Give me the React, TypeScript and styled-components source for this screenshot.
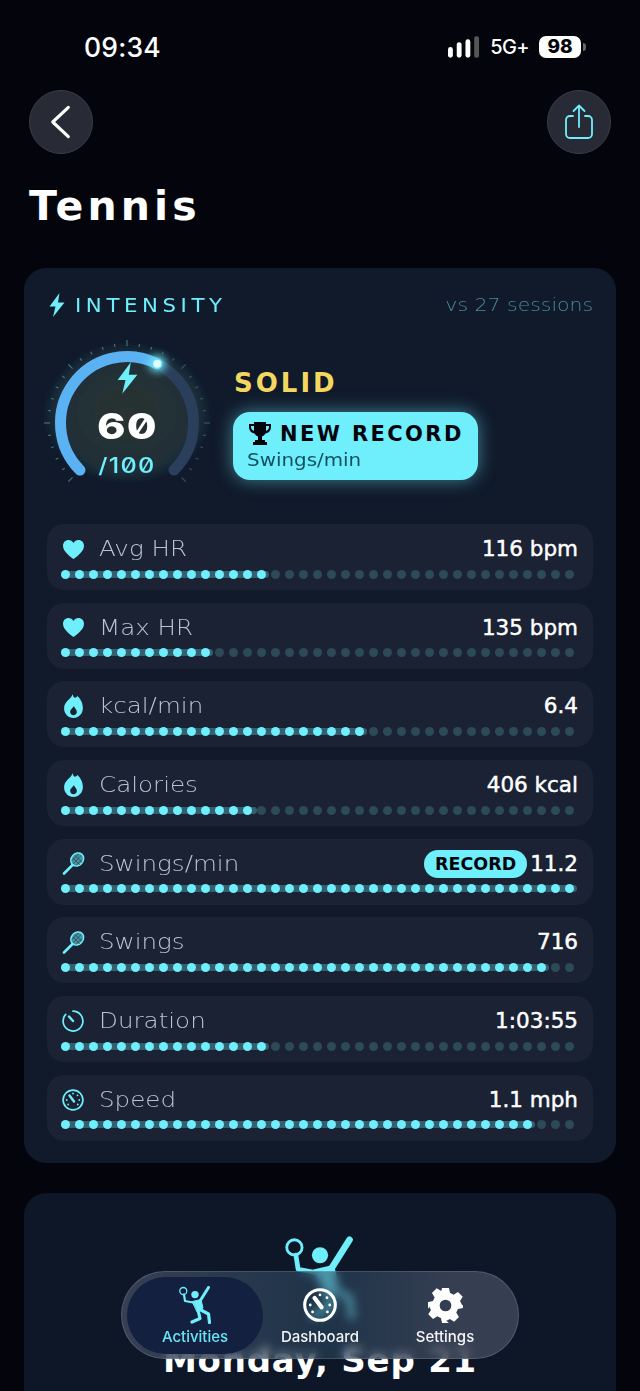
import React from "react";
import styled, { createGlobalStyle } from "styled-components";

const Global = createGlobalStyle`
  html, body { margin: 0; padding: 0; background: #04050c; }
  * { box-sizing: border-box; }
`;
const display = `"DejaVu Sans", "Liberation Sans", sans-serif`;
const ui = `Inter, "Liberation Sans", sans-serif`;
const cyan = "#6feefc";

const Page = styled.div`
  position: relative; width: 640px; height: 1391px; overflow: hidden;
  background: #04050c; font-family: ${display}; color: #fff;
`;
const StatusBar = styled.div`
  height: 90px; padding: 33px 54px 0 84px; display: flex; justify-content: space-between; align-items: flex-start;
  font-family: ${ui};
`;
const Clock = styled.div`font-size: 26.5px; line-height: 28px; font-weight: 500; letter-spacing: 0.2px;`;
const StatusRight = styled.div`display: flex; align-items: center; gap: 10px; height: 28px;`;
const Network = styled.div`font-size: 20px; font-weight: 500; line-height: 28px; letter-spacing: -0.6px;`;
const BatteryWrap = styled.div`display: flex; align-items: center; gap: 2px;`;
const Battery = styled.div`
  width: 42px; height: 22px; background: #fff; border-radius: 7px; color: #04050c;
  font-size: 19px; font-weight: 800; line-height: 22px; text-align: center;
`;
const BatteryTip = styled.div`width: 3px; height: 8px; background: #666; border-radius: 0 3px 3px 0;`;
const TopBar = styled.div`height: 64px; padding: 0 29px; display: flex; justify-content: space-between;`;
const RoundButton = styled.button`
  width: 64px; height: 64px; border-radius: 50%; padding: 0; border: 1px solid #3a3d47;
  background: #282b35; display: flex; align-items: center; justify-content: center;
`;
const Title = styled.h1`
  margin: 30px 0 0 29px; height: 44px; font-size: 41px; line-height: 44px; font-weight: 700;
  letter-spacing: 4.1px; font-family: ${display}; color: #fff;
`;
const Card = styled.section`
  margin: 40px 24px 0; height: 895px; padding: 0 23px; border-radius: 22px;
  background: #101a2b; display: flex; flex-direction: column;
`;
const CardHeader = styled.div`height: 74px; padding-top: 23px; display: flex; justify-content: space-between; align-items: flex-start;`;
const HeaderLeft = styled.div`display: flex; align-items: center; gap: 10px; height: 28px; padding-left: 2px;`;
const HeaderTitle = styled.div`
  font-size: 19px; line-height: 28px; font-weight: 400; letter-spacing: 4.1px; color: ${cyan};
  transform: scaleX(1.12); transform-origin: left center;
`;
const HeaderNote = styled.div`
  font-size: 17px; line-height: 28px; color: #4a8a9c; font-weight: 300; white-space: nowrap;
  transform: scaleX(1.2); transform-origin: right center;
`;
const Summary = styled.div`height: 182px; display: flex; align-items: flex-start;`;
const GaugeBox = styled.div`position: relative; width: 186px; height: 176px; flex: none; margin-left: -13px;`;
const GaugeSvg = styled.svg`position: absolute; inset: 0; overflow: visible;`;
const GaugeText = styled.div`
  position: absolute; inset: 0; display: flex; flex-direction: column; align-items: center;
`;
const GaugeValue = styled.div`
  margin-top: 64px; font-size: 36px; line-height: 40px; font-weight: 800; letter-spacing: 1px; color: #fff;
  font-family: ${ui}; font-feature-settings: "zero"; transform: scaleX(1.2);
`;
const GaugeMax = styled.div`
  margin-top: 2px; font-size: 21px; line-height: 36px; font-weight: 500; color: ${cyan}; letter-spacing: 1px;
  font-family: ${ui}; font-feature-settings: "zero"; transform: scaleX(1.2);
`;
const SummaryRight = styled.div`margin-left: 14px; padding-top: 26px; display: flex; flex-direction: column;`;
const Grade = styled.div`font-size: 26px; line-height: 30px; font-weight: 700; letter-spacing: 3px; color: #f3d860;`;
const RecordBox = styled.div`
  margin: 14px 0 0 -1px; width: 245px; height: 68px; border-radius: 17px; background: ${cyan};
  box-shadow: 0 0 18px rgba(111,238,252,.5); padding: 8px 14px; color: #04050c;
`;
const RecordTop = styled.div`display: flex; align-items: center; gap: 9px; padding-left: 2px; height: 28px;`;
const RecordTitle = styled.div`font-size: 21px; font-weight: 700; letter-spacing: 2.4px; line-height: 28px; white-space: nowrap;`;
const RecordSub = styled.div`
  font-size: 17px; line-height: 24px; color: #15505e; transform: scaleX(1.17); transform-origin: left center;
`;
const RowList = styled.div`display: flex; flex-direction: column; gap: 12.7px;`;
const Row = styled.div`height: 66px; border-radius: 17px; background: #1a2233; padding: 10px 15px 0 14px;`;
const RowHead = styled.div`height: 30px; display: flex; align-items: center;`;
const IconBox = styled.div`width: 24px; display: flex; justify-content: center; align-items: center; flex: none;`;
const RowLabel = styled.div`
  margin-left: 14px; flex: 1; font-size: 21px; font-weight: 300; color: #b8c4d4; line-height: 30px;
  transform: scaleX(1.17); transform-origin: left center;
`;
const RowValue = styled.div`
  font-size: 21.5px; font-weight: 400; line-height: 30px; color: #fff; white-space: nowrap;
  -webkit-text-stroke: 0.45px #fff;
`;
const RecordPill = styled.div`
  width: 103px; height: 28px; border-radius: 14px; background: ${cyan}; color: #04050c; margin-right: 3px;
  font-size: 17.5px; font-weight: 700; line-height: 28px; text-align: center;
`;
const Track = styled.div`position: relative; margin-top: 5.5px; height: 9px; display: flex; gap: 5px;`;
const TrackFill = styled.div`position: absolute; left: 0; top: 1px; bottom: 1px; border-radius: 4px; background: rgba(111,238,252,.3);`;
const Dot = styled.span<{ $on: boolean }>`
  position: relative; width: 9px; height: 9px; border-radius: 50%; flex: none;
  background: ${(p) => (p.$on ? cyan : "#2c4a58")};
`;
const LowerCard = styled.section`
  margin: 30px 24px 0; height: 260px; border-radius: 22px 22px 0 0; background: #0d1727;
  display: flex; flex-direction: column; align-items: center; padding-top: 43px;
`;
const DateLine = styled.div`font-size: 34px; font-weight: 700; line-height: 40px; letter-spacing: 0.8px; margin-top: 20px; white-space: nowrap;`;
const Nav = styled.nav`
  position: absolute; left: 121px; top: 1271px; width: 398px; height: 88px; border-radius: 44px;
  border: 1px solid rgba(255,255,255,.14); padding: 5px;
  background: linear-gradient(90deg, rgba(62,72,92,.84), rgba(45,75,100,.55) 52%, rgba(62,70,90,.86) 85%);
  backdrop-filter: blur(5px); display: grid; grid-template-columns: 136px 114px 136px; font-family: ${ui};
`;
const NavItem = styled.div<{ $active?: boolean }>`
  height: 77px; border-radius: 39px;
  background: ${(p) => (p.$active ? "#13203f" : "transparent")};
  color: ${(p) => (p.$active ? cyan : "#fff")};
  display: flex; flex-direction: column; align-items: center; padding-top: 9px;
`;
const NavIconSlot = styled.div`height: 38px; display: flex; align-items: center; justify-content: center;`;
const NavLabel = styled.div`font-size: 15px; line-height: 20px; font-weight: 500; margin-top: 3px; opacity: .95; white-space: nowrap;`;

const Bolt = ({ size = 20, h = 24 }: { size?: number; h?: number }) => (
  <svg width={size} height={h} viewBox="0 0 16 24"><path d="M10.5 0 L0.5 13.5 H6.5 L4 24 L15.5 9.5 H9 Z" fill={cyan} /></svg>
);
const Heart = () => (
  <svg width="21" height="19" viewBox="0 0 21 19"><path d="M10.5 19C7 16.3 0 11.6 0 5.7 0 2.4 2.5 0 5.5 0c2.1 0 3.9 1.1 5 3 1.1-1.9 2.9-3 5-3 3 0 5.5 2.4 5.5 5.7 0 5.900-7 10.6-10.5 13.3Z" fill={cyan} /></svg>
);
const Flame = () => (
  <svg width="19" height="24" viewBox="0 0 18 23"><path fillRule="evenodd" fill={cyan} d="M8 0c.6 3 2 4.400 3.600 3.200.5-.4.8-.9 1-1.400C15.800 4.500 18 8.300 18 13.500 18 19 14 23 9 23S0 19 0 13.900C0 9.800 2.300 7.500 4.500 5.300 6.200 3.600 7.700 2.200 8 0ZM9.300 11.500C8.700 13.500 5.800 14.600 5.800 17.200c0 1.800 1.400 3.200 3.200 3.200s3.200-1.400 3.200-3.200c0-2.400-2-3.400-2.900-5.700Z" /></svg>
);
const Racket = () => (
  <svg width="23" height="23" viewBox="0 0 23 23" fill="none" stroke={cyan}>
    <ellipse cx="15.200" cy="7.500" rx="6" ry="7" transform="rotate(40 15.200 7.500)" fill={cyan} fillOpacity=".55" strokeWidth="1.500" />
    <path d="M11 6l7 7M13 3.500l7 7M9.500 9l7-7M11 12l8-8.500M14 13.500l6-6" strokeWidth=".7" stroke="#1a2233" strokeOpacity=".7" />
    <path d="M10.500 13 L2 21.500" strokeWidth="2.600" strokeLinecap="round" />
  </svg>
);
const Timer = () => (
  <svg width="22" height="22" viewBox="0 0 22 22" fill="none" stroke={cyan} strokeWidth="1.700" strokeLinecap="round">
    <path d="M11 1.200a9.900 9.900 0 1 1-7.300 3.200" />
    <path d="M7 6.500 11 11" strokeWidth="2.400" />
  </svg>
);
const Speedo = ({ size = 22, color = cyan, stroke = 1.7 }: { size?: number; color?: string; stroke?: number }) => (
  <svg width={size} height={size} viewBox="0 0 22 22" fill="none" stroke={color} strokeWidth={stroke}>
    <circle cx="11" cy="11" r="9.900" />
    <path d="M7.500 6.500 12 12.500" strokeWidth={stroke * 1.4} strokeLinecap="round" />
    <g fill={color} stroke="none">
      <circle cx="11" cy="4.500" r=".9" /><circle cx="15.500" cy="6.300" r=".9" /><circle cx="17.300" cy="11" r=".9" />
      <circle cx="15.800" cy="15.500" r=".9" /><circle cx="6.200" cy="15.500" r=".9" /><circle cx="4.700" cy="11" r=".9" />
    </g>
  </svg>
);
const Player = ({ width, height, color = cyan }: { width: number; height: number; color?: string }) => (
  <svg width={width} height={height} viewBox="0 0 32 38" fill="none" stroke={color} strokeLinecap="round" strokeLinejoin="round">
    <circle cx="4.300" cy="5" r="3.500" strokeWidth="1.300" />
    <path d="M5 8.600 6 15 14 16.500" strokeWidth="2.200" />
    <path d="M29.500 1.500 21 15" strokeWidth="3" />
    <circle cx="16" cy="8.600" r="3.700" fill={color} stroke="none" />
    <path d="M13.500 15.500 22 13.500 24 22 18.500 26Z" fill={color} strokeWidth="1" />
    <path d="M20 23 29.500 28 30.500 36.500" strokeWidth="3.200" />
    <path d="M19 24 21 32.500 13 36" strokeWidth="3.200" />
  </svg>
);
const Gear = () => (
  <svg width="37" height="37" viewBox="0 0 38 38"><path fill="#fff" fillRule="evenodd" d="M15.500 1h7l1.200 5.200c1.300.4 2.500 1 3.600 1.700l4.500-2.800 4.900 4.900-2.800 4.500c.7 1.100 1.300 2.300 1.700 3.600L37 19v0l-.1 2.500-5.200 1.200c-.4 1.300-1 2.500-1.700 3.600l2.800 4.500-4.900 4.900-4.500-2.800c-1.100.7-2.300 1.300-3.600 1.700L22.500 37h-7l-1.200-5.200c-1.300-.4-2.500-1-3.600-1.700l-4.500 2.800-4.900-4.900 2.800-4.500c-.7-1.100-1.300-2.300-1.700-3.600L1 22.500v-7l.6-.1 1.200-.3 3.400-.8c.4-1.300 1-2.500 1.700-3.600L5.100 6.100l4.900-4.900 4.500 2.800c.0 0 .1 0 .1 0ZM19 13a6 6 0 1 0 0 12 6 6 0 0 0 0-12Z" /></svg>
);
const Trophy = () => (
  <svg width="22" height="24" viewBox="0 0 22 24" fill="#04050c"><path d="M5 0h12v2h5v3c0 3.500-2.500 6-5.600 6.500-.7 1.400-2 2.600-3.400 3V18h3v2h2v3H4v-3h2v-2h3v-3.500c-1.400-.4-2.700-1.600-3.400-3C2.500 11 0 8.500 0 5V2h5Zm12 4v5c1.700-.7 3-2.200 3-4V4ZM5 4H2v1c0 1.800 1.300 3.300 3 4Z" /></svg>
);

type Metric = { label: string; value: string; on: number; fill: number; icon: React.ReactNode; record?: boolean };
const metrics: Metric[] = [
  { label: "Avg HR", value: "116 bpm", on: 15, fill: 208, icon: <Heart /> },
  { label: "Max HR", value: "135 bpm", on: 11, fill: 152, icon: <Heart /> },
  { label: "kcal/min", value: "6.4", on: 22, fill: 306, icon: <Flame /> },
  { label: "Calories", value: "406 kcal", on: 14, fill: 196, icon: <Flame /> },
  { label: "Swings/min", value: "11.2", on: 37, fill: 516, icon: <Racket />, record: true },
  { label: "Swings", value: "716", on: 35, fill: 488, icon: <Racket /> },
  { label: "Duration", value: "1:03:55", on: 15, fill: 208, icon: <Timer /> },
  { label: "Speed", value: "1.1 mph", on: 34, fill: 474, icon: <Speedo /> },
];

const polar = (r: number, deg: number, cx = 93, cy = 81) => {
  const a = (deg * Math.PI) / 180;
  return [cx + r * Math.cos(a), cy + r * Math.sin(a)];
};
const arc = (r: number, from: number, to: number) => {
  const [x1, y1] = polar(r, from);
  const [x2, y2] = polar(r, to);
  return `M${x1} ${y1}A${r} ${r} 0 ${to - from > 180 ? 1 : 0} 1 ${x2} ${y2}`;
};
const ticks = Array.from({ length: 31 }, (_, i) => 135 + i * 9);

const BoltSlot = styled.div`position: absolute; left: 83px; top: 20px; display: flex;`;
const GaugeBolt = () => <BoltSlot><Bolt size={21} h={32} /></BoltSlot>;

function Gauge() {
  const [dx, dy] = polar(66.5, 297);
  return (
    <GaugeBox>
      <GaugeSvg width="186" height="176" viewBox="0 0 186 176" fill="none">
        <defs>
          <radialGradient id="halo">
            <stop offset="0" stopColor="#2e3632" stopOpacity=".85" />
            <stop offset=".8" stopColor="#26393c" stopOpacity=".7" />
            <stop offset="1" stopColor="#2f5a64" stopOpacity="0" />
          </radialGradient>
          <filter id="soft" x="-50%" y="-50%" width="200%" height="200%"><feGaussianBlur stdDeviation="4" /></filter>
          <filter id="softer" x="-30%" y="-30%" width="160%" height="160%"><feGaussianBlur stdDeviation="3" /></filter>
        </defs>
        <path d="M31 140 A 83 83 0 1 1 155 140 L 125 140 L 60 140 Z" fill="url(#halo)" filter="url(#softer)" />
        {ticks.map((deg, i) => {
          const major = i % 5 === 0;
          const [x1, y1] = polar(77, deg);
          const [x2, y2] = polar(major ? 83 : 80, deg);
          return <line key={deg} x1={x1} y1={y1} x2={x2} y2={y2} stroke="#4f9aa6" strokeOpacity={deg < 297 ? 0.7 : 0.45} strokeWidth="1.200" />;
        })}
        <path d={arc(66.5, 135, 405)} stroke="#2a3f5c" strokeWidth="11" strokeLinecap="round" />
        <path d={arc(66.5, 135, 297)} stroke="#5ab2f2" strokeWidth="11" strokeLinecap="round" />
        <circle cx={dx} cy={dy} r="8" fill={cyan} filter="url(#soft)" />
        <circle cx={dx} cy={dy} r="4" fill="#dffcff" />
      </GaugeSvg>
      <GaugeText>
        <GaugeBolt />
        <GaugeValue>60</GaugeValue>
        <GaugeMax>/100</GaugeMax>
      </GaugeText>
    </GaugeBox>
  );
}

export default function App() {
  return (
    <Page>
      <Global />
      <StatusBar>
        <Clock>09:34</Clock>
        <StatusRight>
          <svg width="32" height="22" viewBox="0 0 33 22" fill="#fff">
            <rect x="0" y="11" width="5" height="11" rx="2.500" /><rect x="9" y="6" width="5" height="16" rx="2.500" />
            <rect x="18" y="3" width="5" height="19" rx="2.500" /><rect x="27" y="0" width="5" height="22" rx="2" fill="#555" />
          </svg>
          <Network>5G+</Network>
          <BatteryWrap><Battery>98</Battery><BatteryTip /></BatteryWrap>
        </StatusRight>
      </StatusBar>
      <TopBar>
        <RoundButton aria-label="Back">
          <svg width="22" height="34" viewBox="0 0 24 36" fill="none" stroke="#fff" strokeWidth="3.400" strokeLinecap="round" strokeLinejoin="round"><path d="M20 2 3 18l17 16" /></svg>
        </RoundButton>
        <RoundButton aria-label="Share">
          <svg width="30" height="36" viewBox="0 0 30 36" fill="none" stroke={cyan} strokeWidth="1.800" strokeLinecap="round" strokeLinejoin="round">
            <path d="M9 12H6a4 4 0 0 0-4 4v14a4 4 0 0 0 4 4h18a4 4 0 0 0 4-4V16a4 4 0 0 0-4-4h-3" />
            <path d="M15 23V1.500M9.500 7 15 1.500 20.500 7" />
          </svg>
        </RoundButton>
      </TopBar>
      <Title>Tennis</Title>
      <Card>
        <CardHeader>
          <HeaderLeft><Bolt size={16} h={24} /><HeaderTitle>INTENSITY</HeaderTitle></HeaderLeft>
          <HeaderNote>vs 27 sessions</HeaderNote>
        </CardHeader>
        <Summary>
          <Gauge />
          <SummaryRight>
            <Grade>SOLID</Grade>
            <RecordBox>
              <RecordTop><Trophy /><RecordTitle>NEW RECORD</RecordTitle></RecordTop>
              <RecordSub>Swings/min</RecordSub>
            </RecordBox>
          </SummaryRight>
        </Summary>
        <RowList>
          {metrics.map((m) => (
            <Row key={m.label}>
              <RowHead>
                <IconBox>{m.icon}</IconBox>
                <RowLabel>{m.label}</RowLabel>
                {m.record && <RecordPill>RECORD</RecordPill>}
                <RowValue>{m.value}</RowValue>
              </RowHead>
              <Track>
                <TrackFill style={{ width: m.fill }} />
                {Array.from({ length: 37 }, (_, i) => <Dot key={i} $on={i < m.on} />)}
              </Track>
            </Row>
          ))}
        </RowList>
      </Card>
      <LowerCard>
        <Player width={70} height={84} />
        <DateLine>Monday, Sep 21</DateLine>
      </LowerCard>
      <Nav>
        <NavItem $active><NavIconSlot><Player width={32} height={38} /></NavIconSlot><NavLabel>Activities</NavLabel></NavItem>
        <NavItem><NavIconSlot><Speedo size={34} color="#fff" stroke={2} /></NavIconSlot><NavLabel>Dashboard</NavLabel></NavItem>
        <NavItem><NavIconSlot><Gear /></NavIconSlot><NavLabel>Settings</NavLabel></NavItem>
      </Nav>
    </Page>
  );
}
